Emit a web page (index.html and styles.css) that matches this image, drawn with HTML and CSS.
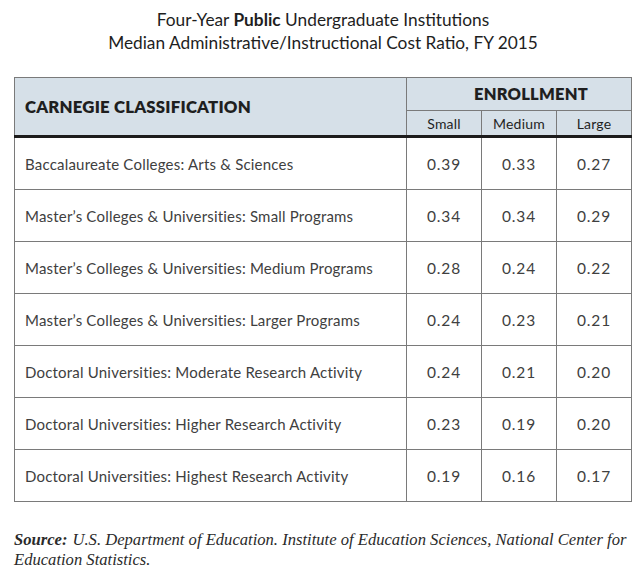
FILE: index.html
```html
<!DOCTYPE html>
<html>
<head>
<meta charset="utf-8">
<link rel="stylesheet" href="styles.css">
</head>
<body>
<div class="page">
  <div class="title">
    <div>Four-Year <b>Public</b> Undergraduate Institutions</div>
    <div>Median Administrative/Instructional Cost Ratio, FY 2015</div>
  </div>
  <table class="grid">
    <colgroup>
      <col class="c-name"><col class="c-num"><col class="c-num"><col class="c-num">
    </colgroup>
    <thead>
      <tr class="h1">
        <th rowspan="2" class="cls">CARNEGIE CLASSIFICATION</th>
        <th colspan="3" class="enr">ENROLLMENT</th>
      </tr>
      <tr class="h2">
        <th>Small</th><th>Medium</th><th>Large</th>
      </tr>
    </thead>
    <tbody>
      <tr><td class="name">Baccalaureate Colleges: Arts &amp; Sciences</td><td>0.39</td><td>0.33</td><td>0.27</td></tr>
      <tr><td class="name">Master’s Colleges &amp; Universities: Small Programs</td><td>0.34</td><td>0.34</td><td>0.29</td></tr>
      <tr><td class="name">Master’s Colleges &amp; Universities: Medium Programs</td><td>0.28</td><td>0.24</td><td>0.22</td></tr>
      <tr><td class="name">Master’s Colleges &amp; Universities: Larger Programs</td><td>0.24</td><td>0.23</td><td>0.21</td></tr>
      <tr><td class="name">Doctoral Universities: Moderate Research Activity</td><td>0.24</td><td>0.21</td><td>0.20</td></tr>
      <tr><td class="name">Doctoral Universities: Higher Research Activity</td><td>0.23</td><td>0.19</td><td>0.20</td></tr>
      <tr><td class="name">Doctoral Universities: Highest Research Activity</td><td>0.19</td><td>0.16</td><td>0.17</td></tr>
    </tbody>
  </table>
  <p class="source"><b class="src-label">Source:</b><span class="src-text">U.S. Department of Education. Institute of Education Sciences, National Center for Education Statistics.</span></p>
</div>
</body>
</html>
```
FILE: styles.css
```css
html, body {
  margin: 0;
  padding: 0;
  background: #ffffff;
}
.page {
  width: 644px;
  height: 574px;
  padding: 8px 0 0 14px;
  box-sizing: border-box;
  font-family: Lato, "Open Sans", sans-serif;
  color: #333;
}
.title {
  width: 618px;
  text-align: center;
  font-size: 17.3px;
  line-height: 23px;
  color: #1e1e1e;
}
.title b {
  font-weight: 700;
}
.grid {
  margin-top: 23px;
  width: 618px;
  border-collapse: collapse;
  table-layout: fixed;
  border: 1px solid #7a7a7a;
}
.c-name { width: 392px; }
.c-num { width: 75px; }
.grid th, .grid td {
  border: 1px solid #7a7a7a;
  padding: 0;
}
.grid thead th {
  background: #d6e0e8;
  color: #1f1f1f;
}
.h1 th { height: 32px; }
.h2 th { height: 24px; }
.grid thead tr.h2 th,
.grid thead th.cls {
  border-bottom: 3px solid #1c1c1c;
}
.cls {
  text-align: left;
  padding-left: 10px !important;
  font-size: 16.8px;
  font-weight: 800;
  letter-spacing: 0.2px;
}
.enr {
  font-size: 16.5px;
  font-weight: 800;
  letter-spacing: 0.2px;
  padding-left: 24px !important;
}
.h2 th {
  font-size: 14px;
  font-weight: 400;
  color: #3a3a3a;
  letter-spacing: 0.2px;
}
.grid tbody td {
  height: 51px;
  text-align: center;
  font-size: 15.5px;
  color: #404040;
  letter-spacing: 0.9px;
}
.grid tbody td.name {
  text-align: left;
  padding-left: 10px;
  font-size: 15px;
  letter-spacing: 0.2px;
}
.source {
  margin: 28px 0 0 0;
  width: 618px;
  font-family: "Liberation Serif", serif;
  font-style: italic;
  font-size: 16.6px;
  line-height: 20px;
  color: #2a2a2a;
}
.src-label {
  font-weight: 700;
  margin-right: 5px;
}
```
